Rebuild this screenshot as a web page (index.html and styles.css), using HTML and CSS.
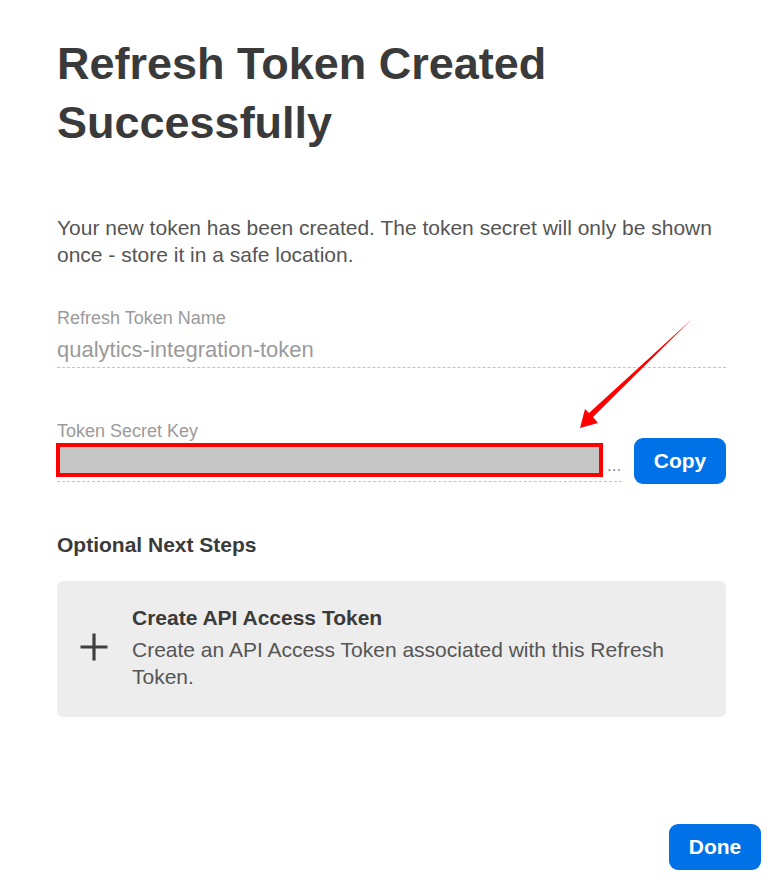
FILE: index.html
```html
<!DOCTYPE html>
<html lang="en">
<head>
<meta charset="utf-8">
<title>Refresh Token Created Successfully</title>
<link rel="stylesheet" href="styles.css">
</head>
<body>
<div class="page">
  <h1 class="title">Refresh Token Created Successfully</h1>
  <p class="intro">Your new token has been created. The token secret will only be shown once - store it in a safe location.</p>

  <div class="field">
    <div class="field-label">Refresh Token Name</div>
    <div class="field-value">qualytics-integration-token</div>
  </div>

  <div class="secret-row">
    <div class="field secret-field">
      <div class="field-label">Token Secret Key</div>
      <div class="secret-value"><span class="mask"></span><span class="dots">...</span></div>
    </div>
    <button class="btn btn-copy">Copy</button>
  </div>

  <h2 class="steps-title">Optional Next Steps</h2>
  <div class="card">
    <svg class="plus" width="30" height="30" viewBox="0 0 30 30" aria-hidden="true">
      <path d="M15 1.5 V28.5 M1.5 15 H28.5" stroke="#3f3f3f" stroke-width="3.2" fill="none"/>
    </svg>
    <div class="card-text">
      <div class="card-title">Create API Access Token</div>
      <div class="card-desc">Create an API Access Token associated with this Refresh Token.</div>
    </div>
  </div>

  <div class="footer">
    <button class="btn btn-done">Done</button>
  </div>

  <svg class="arrow" width="780" height="884" viewBox="0 0 780 884" aria-hidden="true">
    <polygon points="692,319 593,417 598,423 580,428 585,409 589,413" fill="#ff0000"/>
  </svg>
</div>
</body>
</html>
```
FILE: styles.css
```css
html, body {
  margin: 0;
  padding: 0;
  background: #ffffff;
}
body {
  font-family: "Liberation Sans", Arial, sans-serif;
  color: #4d4d4d;
}
.page {
  position: relative;
  width: 780px;
  height: 884px;
  box-sizing: border-box;
  padding: 0 54px 0 57px;
  overflow: hidden;
}
.title {
  margin: 34px 0 0;
  font-size: 45px;
  line-height: 59px;
  font-weight: 700;
  color: #3a3a3a;
  width: 560px;
}
.intro {
  margin: 62px -12px 0 0;
  font-size: 21px;
  line-height: 27px;
  color: #555555;
}
.field {
  margin-top: 39px;
  border-bottom: 1px dashed #c4c4c4;
  padding-bottom: 4px;
}
.field-label {
  font-size: 18px;
  line-height: 22px;
  color: #9a9a9a;
}
.field-value {
  margin-top: 8px;
  font-size: 22px;
  line-height: 26px;
  color: #9a9a9a;
}
.secret-row {
  display: flex;
  align-items: flex-end;
  gap: 12px;
  margin-top: 52px;
}
.secret-field {
  flex: 1;
  margin-top: 0;
  padding-bottom: 4px;
}
.secret-value {
  display: flex;
  align-items: flex-end;
  margin-top: 1px;
}
.mask {
  display: block;
  width: 539px;
  height: 26px;
  background: #c6c6c6;
  border: 4px solid #ff0000;
  margin-left: -1px;
}
.dots {
  font-size: 17px;
  line-height: 14px;
  color: #888;
  margin-left: 4px;
  margin-bottom: 4px;
}
.btn {
  font-family: "Liberation Sans", Arial, sans-serif;
  font-weight: 700;
  font-size: 21px;
  color: #ffffff;
  background: #0071e6;
  border: none;
  border-radius: 9px;
  width: 92px;
  height: 46px;
  padding: 0;
}
.btn-copy {
  margin-bottom: -2px;
}
.steps-title {
  margin: 50px 0 0;
  font-size: 21px;
  line-height: 26px;
  font-weight: 700;
  color: #3a3a3a;
}
.card {
  margin-top: 23px;
  background: #ededed;
  border-radius: 6px;
  height: 136px;
  box-sizing: border-box;
  display: flex;
  align-items: center;
  padding: 0 20px 0 22px;
  gap: 23px;
}
.plus {
  flex: none;
  margin-bottom: 4px;
}
.card-text {
  margin-bottom: 4px;
}
.card-title {
  font-size: 21px;
  line-height: 26px;
  font-weight: 700;
  color: #3a3a3a;
}
.card-desc {
  margin-top: 5px;
  font-size: 21px;
  line-height: 27px;
  color: #555555;
}
.footer {
  display: flex;
  justify-content: flex-end;
  margin-top: 107px;
  margin-right: -35px;
}
.arrow {
  position: absolute;
  left: 0;
  top: 0;
  pointer-events: none;
}
```
